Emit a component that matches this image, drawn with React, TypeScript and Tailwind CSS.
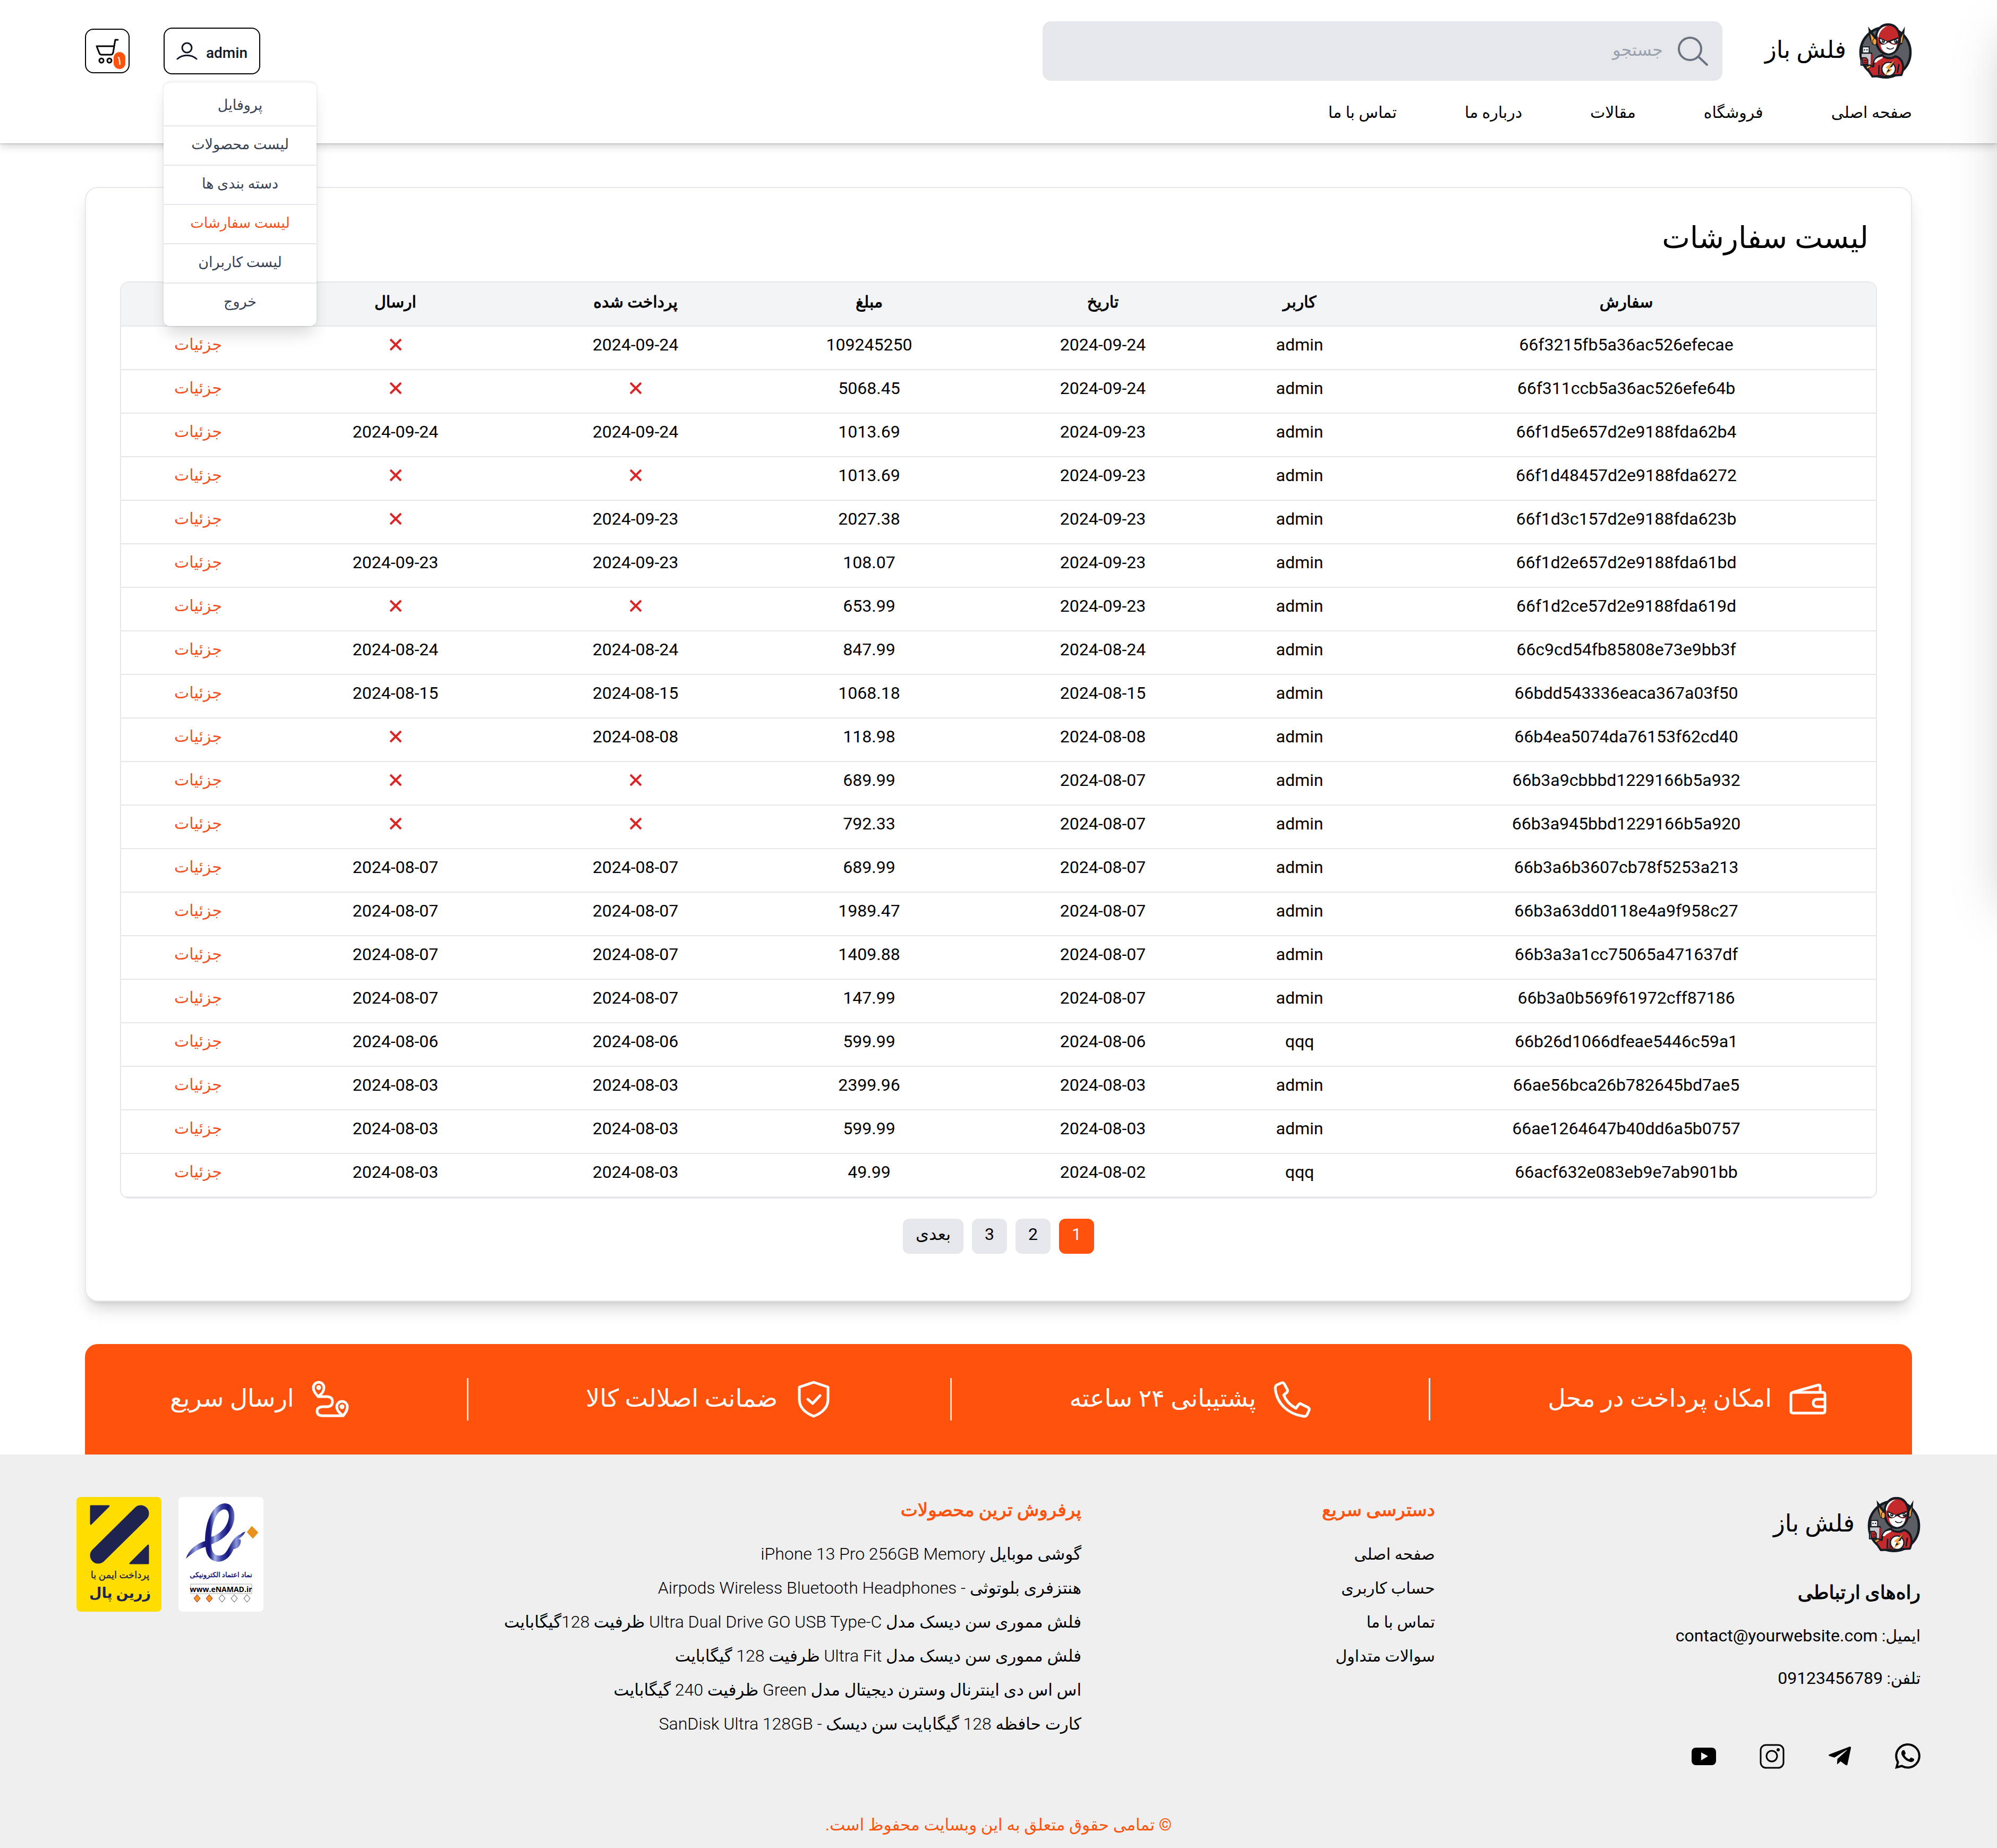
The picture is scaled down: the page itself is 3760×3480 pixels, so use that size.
import type { ReactNode } from "react";
import { FaTelegramPlane } from "react-icons/fa";
import { BsWhatsapp } from "react-icons/bs";

type Order = { id: string; user: string; date: string; total: string; paid: string | null; sent: string | null };

const raw: [string, string, string, string, string, string][] = [
  ["66f3215fb5a36ac526efecae", "admin", "2024-09-24", "109245250", "2024-09-24", ""],
  ["66f311ccb5a36ac526efe64b", "admin", "2024-09-24", "5068.45", "", ""],
  ["66f1d5e657d2e9188fda62b4", "admin", "2024-09-23", "1013.69", "2024-09-24", "2024-09-24"],
  ["66f1d48457d2e9188fda6272", "admin", "2024-09-23", "1013.69", "", ""],
  ["66f1d3c157d2e9188fda623b", "admin", "2024-09-23", "2027.38", "2024-09-23", ""],
  ["66f1d2e657d2e9188fda61bd", "admin", "2024-09-23", "108.07", "2024-09-23", "2024-09-23"],
  ["66f1d2ce57d2e9188fda619d", "admin", "2024-09-23", "653.99", "", ""],
  ["66c9cd54fb85808e73e9bb3f", "admin", "2024-08-24", "847.99", "2024-08-24", "2024-08-24"],
  ["66bdd543336eaca367a03f50", "admin", "2024-08-15", "1068.18", "2024-08-15", "2024-08-15"],
  ["66b4ea5074da76153f62cd40", "admin", "2024-08-08", "118.98", "2024-08-08", ""],
  ["66b3a9cbbbd1229166b5a932", "admin", "2024-08-07", "689.99", "", ""],
  ["66b3a945bbd1229166b5a920", "admin", "2024-08-07", "792.33", "", ""],
  ["66b3a6b3607cb78f5253a213", "admin", "2024-08-07", "689.99", "2024-08-07", "2024-08-07"],
  ["66b3a63dd0118e4a9f958c27", "admin", "2024-08-07", "1989.47", "2024-08-07", "2024-08-07"],
  ["66b3a3a1cc75065a471637df", "admin", "2024-08-07", "1409.88", "2024-08-07", "2024-08-07"],
  ["66b3a0b569f61972cff87186", "admin", "2024-08-07", "147.99", "2024-08-07", "2024-08-07"],
  ["66b26d1066dfeae5446c59a1", "qqq", "2024-08-06", "599.99", "2024-08-06", "2024-08-06"],
  ["66ae56bca26b782645bd7ae5", "admin", "2024-08-03", "2399.96", "2024-08-03", "2024-08-03"],
  ["66ae1264647b40dd6a5b0757", "admin", "2024-08-03", "599.99", "2024-08-03", "2024-08-03"],
  ["66acf632e083eb9e7ab901bb", "qqq", "2024-08-02", "49.99", "2024-08-03", "2024-08-03"],
];
const orders: Order[] = raw.map(([id, user, date, total, paid, sent]) => ({
  id, user, date, total, paid: paid || null, sent: sent || null,
}));

const navItems = ["صفحه اصلی", "فروشگاه", "مقالات", "درباره ما", "تماس با ما"];
const menuItems = ["پروفایل", "لیست محصولات", "دسته بندی ها", "لیست سفارشات", "لیست کاربران", "خروج"];
const quickLinks = ["صفحه اصلی", "حساب کاربری", "تماس با ما", "سوالات متداول"];

function Hero() {
  return (
    <svg viewBox="0 0 300 312" className="h-[104px] w-[100px] shrink-0" aria-hidden="true">
      <circle cx="150" cy="164" r="141" fill="#5d5e63" stroke="#151b22" strokeWidth="14" />
      <path d="M52 18 L60 82 L74 118 L96 124 L92 70 Z" fill="#151b22" />
      <path d="M64 56 L74 112 L92 118 L92 92 Z" fill="#f2a33a" />
      <path d="M260 18 L254 82 L244 118 L226 124 L230 70 Z" fill="#151b22" />
      <path d="M251 56 L244 108 L232 114 L236 86 Z" fill="#f2a33a" />
      <path d="M165 6 C210 6 232 44 231 90 C230 130 210 174 165 174 C120 174 98 130 97 90 C96 44 120 6 165 6Z" fill="#c4292c" stroke="#151b22" strokeWidth="13" />
      <path d="M104 72 C108 34 134 16 160 15 C134 26 114 48 110 82Z" fill="#fff" />
      <ellipse cx="89" cy="104" rx="11" ry="18" fill="#f2a33a" stroke="#151b22" strokeWidth="4" />
      <path d="M122 118 C140 128 154 112 166 108 C178 112 194 128 214 118 C214 148 196 168 168 170 C140 168 124 146 122 118Z" fill="#fff" />
      <path d="M112 78 L160 100 L222 78 L224 106 C210 124 190 120 168 104 C148 122 124 124 114 108Z" fill="#151b22" />
      <path d="M118 88 L158 102 C154 120 124 122 118 88Z" fill="#fff" />
      <path d="M222 88 L180 102 C186 120 216 120 222 88Z" fill="#fff" />
      <circle cx="138" cy="101" r="9" fill="#151b22" />
      <circle cx="208" cy="101" r="9" fill="#151b22" />
      <circle cx="137" cy="99" r="3" fill="#fff" />
      <circle cx="207" cy="99" r="3" fill="#fff" />
      <path d="M158 138 C170 148 186 148 196 138" fill="none" stroke="#151b22" strokeWidth="5" strokeLinecap="round" />
      <path d="M132 180 C94 190 84 212 80 244 L66 232 L44 252 L76 300 L120 298 L240 292 C258 250 252 198 206 186 C186 202 150 200 132 180Z" fill="#c4292c" stroke="#151b22" strokeWidth="12" strokeLinejoin="round" />
      <path d="M86 222 C92 198 106 190 134 188 C140 200 108 204 100 220Z" fill="#fff" />
      <path d="M114 236 L112 290 M226 230 L218 280" stroke="#151b22" strokeWidth="8" />
      <path d="M130 222 L120 290 L146 298Z" fill="#8f1d22" />
      <circle cx="168" cy="258" r="38" fill="#fff" stroke="#151b22" strokeWidth="7" />
      <path d="M206 206 L150 250 L166 258 L144 296 L188 262 L172 252Z" fill="#f2a33a" />
      <path d="M204 208 L172 252 L188 246Z M166 258 L156 276 L176 268Z" fill="#151b22" />
      <path d="M20 133 H58 V170 H20Z" fill="#f1f1f3" stroke="#151b22" strokeWidth="6" />
      <path d="M28 146 h7 v7 h-7Z M42 146 h7 v7 h-7Z" fill="#151b22" />
      <path d="M12 168 H72 V236 H12Z" fill="#c6c8cd" stroke="#151b22" strokeWidth="7" strokeLinejoin="round" />
      <path d="M68 172 L80 176 L78 236 L66 236Z" fill="#a51f24" />
      <path d="M18 194 H40 L50 206 V232 L22 232Z" fill="#c4292c" stroke="#151b22" strokeWidth="6" />
      <path d="M28 210 H44 M28 221 H44" stroke="#151b22" strokeWidth="4" />
      <path d="M40 246 L62 236 L68 246 L48 258Z" fill="#f2a33a" stroke="#151b22" strokeWidth="4" />
    </svg>
  );
}

function Brand() {
  return (
    <a href="#" className="flex items-center gap-6">
      <Hero />
      <span className="pb-1 text-[45px] leading-[60px]">فلش باز</span>
    </a>
  );
}

function Cross() {
  return (
    <svg viewBox="0 0 24 24" className="mx-auto size-6" role="img" aria-label="خیر">
      <path d="M2 2 L22 22 M22 2 L2 22" stroke="#dc2626" strokeWidth="4" fill="none" />
    </svg>
  );
}

const Latin = ({ children }: { children: ReactNode }) => <span className="text-[32px] leading-none">{children}</span>;
const Light = ({ children }: { children: ReactNode }) => <span className="text-[32px] leading-none font-light">{children}</span>;

function Feature({ label, children }: { label: string; children: ReactNode }) {
  return (
    <div className="flex items-center gap-8">
      <svg viewBox="0 0 72 72" className="size-18" fill="none" stroke="#fff" strokeWidth="5" strokeLinejoin="round" strokeLinecap="round" aria-hidden="true">
        {children}
      </svg>
      <span className="pb-1 text-[46px] leading-[64px]">{label}</span>
    </div>
  );
}
const Divider = () => <span className="h-20 w-[3px] bg-gray-200" />;

function EnamadLogo() {
  return (
    <svg viewBox="0 0 160 216" className="h-[216px] w-40 rounded-lg bg-white" role="img" aria-label="نماد اعتماد الکترونیکی">
      <defs>
        <linearGradient id="ink" x1="14" x2="126" y1="0" y2="0" gradientUnits="userSpaceOnUse">
          <stop offset="0" stopColor="#14147a" />
          <stop offset=".17" stopColor="#9aa6e2" />
          <stop offset=".3" stopColor="#1b1b80" />
          <stop offset=".4" stopColor="#14147a" />
          <stop offset=".49" stopColor="#a5b4ea" />
          <stop offset=".6" stopColor="#3b3fa4" />
          <stop offset=".72" stopColor="#14147a" />
          <stop offset=".85" stopColor="#8a98dc" />
          <stop offset="1" stopColor="#14147a" />
        </linearGradient>
        <linearGradient id="gem">
          <stop offset="0" stopColor="#c8102e" />
          <stop offset=".5" stopColor="#f7931e" />
          <stop offset="1" stopColor="#ffe14d" />
        </linearGradient>
      </defs>
      <path fillRule="evenodd" fill="url(#ink)" d="M14 116 C20 98 34 88 50 83 C50 50 62 15 86 12 C101 11 107 26 105 42 C102 64 84 82 62 89 C62 104 68 112 80 110 C96 107 96 78 117 70 C121 66 124 66 126 65 C123 72 118 76 113 79 L117 80 C119 90 112 98 104 98 C98 112 88 122 74 122 C58 120 52 108 51 94 C36 98 26 106 14 116Z M62 75 C80 70 94 54 95 36 C95 26 90 22 83 24 C70 29 63 52 62 75Z" />
      <path d="M138 56 L149 67 L140 77 L130 66Z" fill="#e8911f" stroke="#e8911f" strokeWidth="2" strokeLinejoin="round" />
      <text x="80" y="151" textAnchor="middle" direction="rtl" fill="#14147a" stroke="#14147a" strokeWidth=".5" fontSize="13">نماد اعتماد الکترونیکی</text>
      <rect x="23" y="164" width="115" height="18" fill="#fff" stroke="#aaa" />
      <text x="80" y="179" textAnchor="middle" direction="ltr" fontFamily="Open Sans" fontWeight="700" fontSize="14">www.eNAMAD.ir</text>
      {[35, 58, 82, 105, 129].map((x, i) => (
        <path key={x} d={`M${x} 184 l6 7 l-6 7 l-6 -7Z`} fill={i < 2 ? "#f7931e" : "#fff"} stroke={i < 2 ? "#8f1d22" : "#444"} strokeWidth="1" />
      ))}
    </svg>
  );
}

function ZarinpalLogo() {
  return (
    <svg viewBox="0 0 160 216" className="h-[216px] w-40 rounded-lg bg-[#ffdd00]" role="img" aria-label="پرداخت ایمن با زرین پال">
      <g fill="#1f2350" stroke="#1f2350" strokeLinejoin="round" strokeWidth="3">
        <path d="M27 17 H61 L27 51Z" />
        <path d="M135 91 V125 H101Z" />
        <path d="M41 110 L121 31" strokeWidth="31" strokeLinecap="round" />
      </g>
      <text x="82" y="153" textAnchor="middle" direction="rtl" fill="#1f2350" stroke="#1f2350" strokeWidth=".4" fontSize="18">پرداخت ایمن با</text>
      <text x="82" y="190" textAnchor="middle" direction="rtl" fill="#1f2350" fontWeight="700" fontSize="27">زرین پال</text>
    </svg>
  );
}

export default function App() {
  return (
    <div dir="rtl" className="relative overflow-hidden bg-white font-[Roboto,'DejaVu_Sans',sans-serif] text-[30px] leading-[48px] text-black">
      <header className="relative z-10 bg-white px-40 pt-10 pb-[34px] shadow-[0_1px_2px_rgba(0,0,0,0.2),0_4px_16px_rgba(0,0,0,0.2)]">
        <div className="flex items-center justify-between">
          <div className="flex items-center gap-20">
            <Brand />
            <label className="flex h-28 w-[1280px] items-center gap-6 rounded-2xl bg-gray-200 px-6">
              <svg viewBox="0 0 64 64" className="size-16 shrink-0" fill="none" stroke="#6b7280" strokeWidth="4" strokeLinecap="round" aria-hidden="true">
                <circle cx="27" cy="28" r="21" />
                <path d="M43 43 L59 58" />
              </svg>
              <input type="search" placeholder="جستجو" aria-label="جستجو" className="min-w-0 flex-1 bg-transparent pb-1 text-[32px] outline-none placeholder:text-gray-400" />
            </label>
          </div>
          <div className="flex items-center gap-16">
            <div className="relative">
              <button type="button" className="flex h-22 items-center gap-4 rounded-2xl border-2 border-black px-[22px] text-[28px] font-medium text-gray-900" dir="ltr">
                <svg viewBox="0 0 40 40" className="size-10" fill="none" stroke="currentColor" strokeWidth="3" strokeLinecap="round" aria-hidden="true">
                  <circle cx="20" cy="14" r="9" />
                  <path d="M2 35 C12 26 28 26 38 35" />
                </svg>
                <span className="pt-2">admin</span>
              </button>
              <ul className="absolute top-[102px] left-0 w-72 divide-y-2 divide-gray-200 rounded-xl border-t-2 border-gray-100 bg-white py-2 text-center text-[27px] text-gray-700 shadow-[0_0_4px_rgba(0,0,0,0.12),0_20px_30px_-6px_rgba(0,0,0,0.15)]">
                {menuItems.map((m) => (
                  <li key={m}>
                    <a href="#" className={m === "لیست سفارشات" ? "block h-18 leading-[68px] text-[#f4511e]" : "block h-18 leading-[68px]"}>{m}</a>
                  </li>
                ))}
              </ul>
            </div>
            <button type="button" aria-label="سبد خرید" className="relative flex size-21 items-center justify-center rounded-2xl border-2 border-black">
              <svg viewBox="0 0 48 48" className="size-12" fill="none" stroke="currentColor" strokeWidth="3" strokeLinecap="round" strokeLinejoin="round" aria-hidden="true">
                <path d="M44 3 H39 L35 27 C34 30 33 31 31 31 H13 C11 31 10 30 9 28 L4 15 H37" />
                <circle cx="13" cy="42" r="4" />
                <circle cx="28" cy="42" r="4" />
              </svg>
              <span className="absolute right-1.5 bottom-1.5 flex h-8 w-[22px] items-center justify-center rounded-full bg-[#ff520d] text-[24px] leading-8 text-white">۱</span>
            </button>
          </div>
        </div>
        <nav className="mt-9">
          <ul className="flex gap-32">
            {navItems.map((n) => (
              <li key={n}><a href="#">{n}</a></li>
            ))}
          </ul>
        </nav>
      </header>

      <main className="mx-40 mt-[82px] rounded-3xl border-2 border-gray-200 bg-white px-16 pt-16 pb-22 shadow-[0_20px_30px_-6px_rgba(0,0,0,0.15),0_8px_12px_-8px_rgba(0,0,0,0.15)]">
        <h1 className="mb-[52px] px-4 text-[56px] leading-[60px]">لیست سفارشات</h1>
        <div className="overflow-hidden rounded-2xl border-2 border-gray-200">
          <table className="w-full table-fixed border-collapse text-center">
            <colgroup>
              <col className="w-[940px]" />
              <col className="w-[290px]" />
              <col className="w-[451px]" />
              <col className="w-[429px]" />
              <col className="w-[451px]" />
              <col className="w-[453px]" />
              <col className="w-[290px]" />
            </colgroup>
            <thead>
              <tr className="h-[82px] border-b-2 border-gray-200 bg-gray-100">
                {["سفارش", "کاربر", "تاریخ", "مبلغ", "پرداخت شده", "ارسال", ""].map((h, i) => (
                  <th key={i} scope="col" className="p-0 pb-2 font-normal [-webkit-text-stroke:1px_black]">{h}</th>
                ))}
              </tr>
            </thead>
            <tbody>
              {orders.map((o) => (
                <tr key={o.id} className="h-[82px] border-b-2 border-gray-200 text-[32px]">
                  <td className="p-0 pb-3">{o.id}</td>
                  <td className="p-0 pb-3">{o.user}</td>
                  <td className="p-0 pb-3">{o.date}</td>
                  <td className="p-0 pb-3">{o.total}</td>
                  <td className="p-0 pb-3">{o.paid ?? <Cross />}</td>
                  <td className="p-0 pb-3">{o.sent ?? <Cross />}</td>
                  <td className="p-0 pb-3 text-[30px] text-[#f4511e]"><a href="#">جزئیات</a></td>
                </tr>
              ))}
            </tbody>
          </table>
        </div>
        <nav aria-label="صفحه‌بندی" className="mt-[38px] flex justify-center gap-4 text-[32px]">
          <button type="button" aria-current="page" className="h-[66px] w-[66px] rounded-xl bg-[#ff520d] pb-2 text-white">1</button>
          <button type="button" className="h-[66px] w-[66px] rounded-xl bg-gray-200 pb-2">2</button>
          <button type="button" className="h-[66px] w-[66px] rounded-xl bg-gray-200 pb-2">3</button>
          <button type="button" className="h-[66px] rounded-xl bg-gray-200 px-6 pb-2">بعدی</button>
        </nav>
      </main>

      <section className="mx-40 mt-20 flex h-52 items-center justify-between rounded-t-3xl bg-[#ff520d] px-40 text-white">
        <Feature label="امکان پرداخت در محل">
          <path d="M4 27 Q4 23 8 23 H64 Q68 23 68 27 V58 Q68 62 64 62 H8 Q4 62 4 58Z" />
          <path d="M10 22 L56 9 Q59 9 59 12 V22" />
          <path d="M68 36 H54 Q46 36 46 43 Q46 50 54 50 H68" />
        </Feature>
        <Divider />
        <Feature label="پشتیبانی ۲۴ ساعته">
          <path d="M16 5 Q19 4 21 7 L27 18 Q28 21 26 23 L20 28 Q26 44 43 53 L48 46 Q50 43 53 45 L65 51 Q69 53 68 56 L64 65 Q62 69 57 68 C28 64 7 44 4 16 Q4 11 7 9Z" />
        </Feature>
        <Divider />
        <Feature label="ضمانت اصلالت کالا">
          <path d="M36 4 L63 13 V36 C63 52 51 62 36 68 C21 62 9 52 9 36 V13Z" />
          <path d="M25 36 L34 44 L48 29" />
        </Feature>
        <Divider />
        <Feature label="ارسال سریع">
          <path d="M13 31 C7 24 4 20 4 14 A10 10 0 0 1 24 14 C24 20 20 26 13 31 H31 Q40 32 40 40 Q40 49 31 50 H21 Q11 51 11 58 Q11 67 21 67 H60 C66 60 68 56 68 50 A10 10 0 0 0 48 50 C48 56 53 62 60 67" />
          <circle cx="14" cy="14" r="2" />
          <circle cx="58" cy="50" r="2" />
        </Feature>
      </section>

      <footer className="bg-[#efefef] px-36 pt-20 pb-5">
        <div className="flex items-start justify-between">
          <div>
            <Brand />
            <h2 className="mt-11 text-[36px] leading-[64px] [-webkit-text-stroke:1px_black]">راه‌های ارتباطی</h2>
            <p className="mt-5 leading-[60px]">ایمیل: <Latin>contact@yourwebsite.com</Latin></p>
            <p className="mt-5 leading-[60px]">تلفن: <Latin>09123456789</Latin></p>
            <div className="mt-23 flex gap-20">
              <a href="#" aria-label="WhatsApp"><BsWhatsapp className="size-12" /></a>
              <a href="#" aria-label="Telegram"><FaTelegramPlane className="size-12" /></a>
              <a href="#" aria-label="Instagram">
                <svg viewBox="0 0 48 48" className="size-12" fill="none" stroke="currentColor" strokeWidth="3" aria-hidden="true">
                  <rect x="3" y="3" width="43" height="43" rx="10" />
                  <circle cx="24" cy="24" r="10" strokeWidth="3" />
                  <circle cx="36" cy="12" r="3" fill="currentColor" stroke="none" />
                </svg>
              </a>
              <a href="#" aria-label="YouTube">
                <svg viewBox="0 0 48 48" className="size-12" aria-hidden="true">
                  <rect x="1" y="8" width="46" height="33" rx="8" />
                  <path d="M19 17 L32 24 L19 32Z" fill="#efefef" />
                </svg>
              </a>
            </div>
          </div>
          <div>
            <h2 className="text-[34px] leading-[48px] text-[#ff520d] [-webkit-text-stroke:1px_#ff520d]">دسترسی سریع</h2>
            <ul className="mt-7 leading-[64px]">
              {quickLinks.map((q) => (
                <li key={q}><a href="#">{q}</a></li>
              ))}
            </ul>
          </div>
          <div>
            <h2 className="text-[34px] leading-[48px] text-[#ff520d] [-webkit-text-stroke:1px_#ff520d]">پرفروش ترین محصولات</h2>
            <ul className="mt-7 text-[31px] leading-[64px]">
              <li><a href="#">گوشی موبایل <Light>iPhone 13 Pro 256GB Memory</Light></a></li>
              <li><a href="#">هنتزفری بلوتوثی <Light>- Airpods Wireless Bluetooth Headphones</Light></a></li>
              <li><a href="#">فلش مموری سن دیسک مدل <Light>Ultra Dual Drive GO USB Type-C</Light> ظرفیت <Light>128</Light>گیگابایت</a></li>
              <li><a href="#">فلش مموری سن دیسک مدل <Light>Ultra Fit</Light> ظرفیت <Light>128</Light> گیگابایت</a></li>
              <li><a href="#">اس اس دی اینترنال وسترن دیجیتال مدل <Light>Green</Light> ظرفیت <Light>240</Light> گیگابایت</a></li>
              <li><a href="#">کارت حافظه <Light>128</Light> گیگابایت سن دیسک <Light>- SanDisk Ultra 128GB</Light></a></li>
            </ul>
          </div>
          <div className="flex gap-8">
            <a href="#"><EnamadLogo /></a>
            <a href="#"><ZarinpalLogo /></a>
          </div>
        </div>
        <p className="mt-[82px] text-center text-[31px] text-[#ff520d]">© تمامی حقوق متعلق به این وبسایت محفوظ است.</p>
      </footer>

      <div className="pointer-events-none absolute top-0 left-full z-20 h-[1680px] w-96 shadow-[0_50px_100px_-24px_rgba(0,0,0,0.25)]" />
    </div>
  );
}
